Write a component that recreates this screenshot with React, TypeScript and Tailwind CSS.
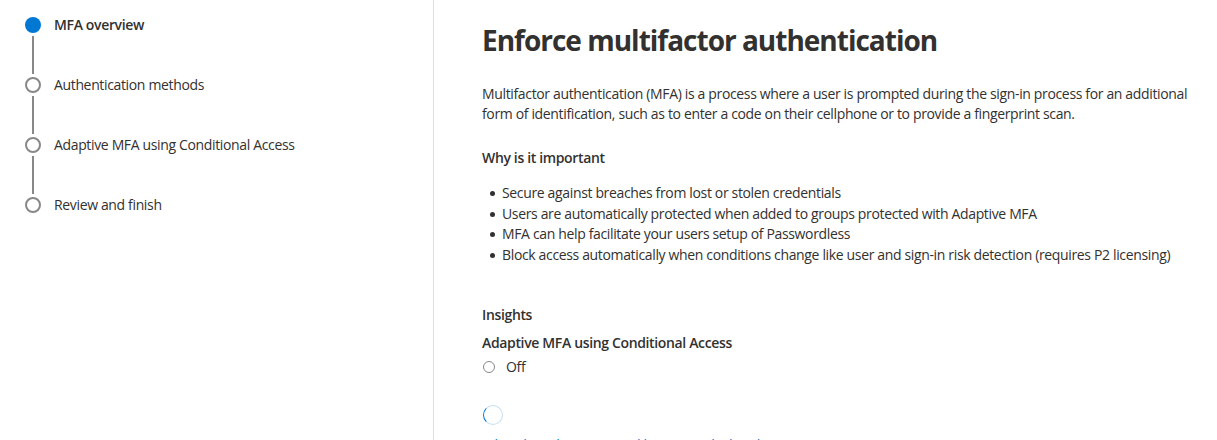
import React from "react";

const steps = [
  { label: "MFA overview", active: true },
  { label: "Authentication methods", active: false },
  { label: "Adaptive MFA using Conditional Access", active: false },
  { label: "Review and finish", active: false },
];

const bullets = [
  "Secure against breaches from lost or stolen credentials",
  "Users are automatically protected when added to groups protected with Adaptive MFA",
  "MFA can help facilitate your users setup of Passwordless",
  "Block access automatically when conditions change like user and sign-in risk detection (requires P2 licensing)",
];

export default function App() {
  return (
    <div
      className="flex h-[440px] w-[1217px] overflow-hidden bg-white text-[#323130]"
      style={{ fontFamily: '"Open Sans", "Noto Sans", sans-serif' }}
    >
      <aside className="w-[434px] shrink-0 border-r border-[#e1dfdd] pl-[25px] pt-[17px]">
        {steps.map((s, i) => (
          <div key={s.label} className="flex">
            <div className="flex w-4 flex-col items-center">
              {s.active ? (
                <div className="h-4 w-4 rounded-full bg-[#0078d4]" />
              ) : (
                <div className="h-4 w-4 rounded-full border-2 border-[#8a8886] bg-white" />
              )}
              {i < steps.length - 1 && (
                <div className="my-[3px] h-[38px] w-[2px] bg-[#8a8886]" />
              )}
            </div>
            <div
              className={`ml-[13px] text-[14px] leading-4 tracking-[-0.35px] ${
                s.active ? "font-semibold" : ""
              }`}
            >
              {s.label}
            </div>
          </div>
        ))}
      </aside>
      <main className="flex-1 pl-[48px] pr-[20px] pt-[22px]">
        <h1 className="text-[28px] font-bold leading-9 tracking-[-1px]">
          Enforce multifactor authentication
        </h1>
        <p className="mt-[26px] text-[14px] leading-5 tracking-[-0.35px]">
          Multifactor authentication (MFA) is a process where a user is prompted during the sign-in
          process for an additional form of identification, such as to enter a code on their
          cellphone or to provide a fingerprint scan.
        </p>
        <h2 className="mt-[24px] text-[14px] font-semibold leading-5 tracking-[-0.35px]">
          Why is it important
        </h2>
        <ul className="mt-[15px] text-[14px] leading-[20.7px] tracking-[-0.35px]">
          {bullets.map((b) => (
            <li key={b} className="flex items-center">
              <span className="mr-[7px] ml-[8px] h-[5px] w-[5px] rounded-full bg-[#323130]" />
              {b}
            </li>
          ))}
        </ul>
        <h2 className="mt-[39px] text-[14px] font-semibold leading-5 tracking-[-0.35px]">
          Insights
        </h2>
        <h3 className="mt-[8px] text-[14px] font-semibold leading-5 tracking-[-0.35px]">
          Adaptive MFA using Conditional Access
        </h3>
        <div className="mt-[4px] flex items-center text-[14px] leading-5 tracking-[-0.35px]">
          <span className="ml-[1px] h-[12px] w-[12px] rounded-full border border-[#8a8886]" />
          <span className="ml-[11px]">Off</span>
        </div>
        <div className="mt-[28px] ml-[1px] h-[20px] w-[20px] rounded-full border-[1.5px] border-[#c7e0f4] border-l-[#0078d4]" />
        <a className="mt-[10px] block text-[14px] leading-5 tracking-[-0.35px] text-[#0078d4]">
          What does this mean and how is it calculated?
        </a>
      </main>
    </div>
  );
}
